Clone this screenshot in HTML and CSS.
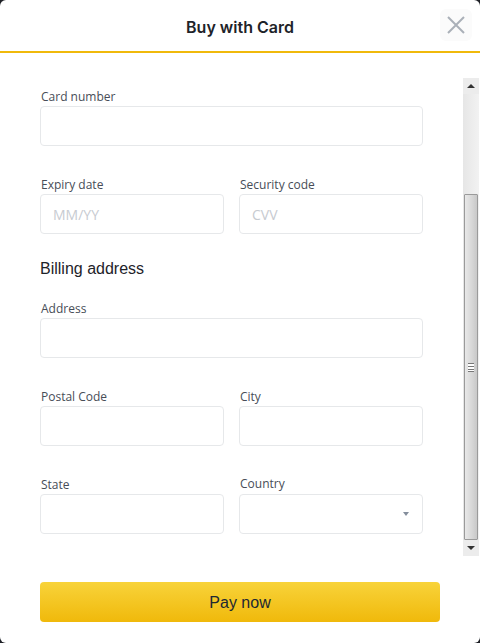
FILE: index.html
```html
<!DOCTYPE html>
<html lang="en">
<head>
    <meta charset="UTF-8">
    <meta name="viewport" content="width=device-width, initial-scale=1.0">
    <title>Buy with Card</title>
    <link rel="stylesheet" href="styles.css">
</head>
<body>
    <div class="modal">
        <!-- Cabeçalho -->
        <div class="header">
            <span></span>
            <h1>Buy with Card</h1>
            <button class="close" aria-label="Close">
                <svg width="18" height="18" viewBox="0 0 18 18">
                    <path d="M1 1 L17 17 M17 1 L1 17" stroke="#aab0b8" stroke-width="2" fill="none"/>
                </svg>
            </button>
        </div>

        <!-- Formulário com barra de rolagem -->
        <div class="scroll-area">
            <form class="card-form">
                <div class="field">
                    <label>Card number</label>
                    <input type="text">
                </div>

                <div class="row">
                    <div class="field">
                        <label>Expiry date</label>
                        <input type="text" placeholder="MM/YY">
                    </div>
                    <div class="field">
                        <label>Security code</label>
                        <input type="text" placeholder="CVV">
                    </div>
                </div>

                <h2>Billing address</h2>

                <div class="field">
                    <label>Address</label>
                    <input type="text">
                </div>

                <div class="row">
                    <div class="field">
                        <label>Postal Code</label>
                        <input type="text">
                    </div>
                    <div class="field">
                        <label>City</label>
                        <input type="text">
                    </div>
                </div>

                <div class="row">
                    <div class="field">
                        <label>State</label>
                        <input type="text">
                    </div>
                    <div class="field country">
                        <label>Country</label>
                        <div class="select"><span class="arrow"></span></div>
                    </div>
                </div>
            </form>

            <div class="scrollbar">
                <div class="sb-btn"><span class="tri up"></span></div>
                <div class="sb-track">
                    <div class="sb-thumb"><span class="grip"></span></div>
                </div>
                <div class="sb-btn"><span class="tri down"></span></div>
            </div>
        </div>

        <div class="footer">
            <button class="pay">Pay now</button>
        </div>
    </div>
</body>
</html>
```
FILE: styles.css
```css
body {
    margin: 0;
    background-color: #1e2026;
    font-family: "Open Sans", Arial, sans-serif;
}
.modal {
    width: 480px;
    height: 643px;
    background-color: #fff;
    border-radius: 6px;
    display: flex;
    flex-direction: column;
    overflow: hidden;
}
.header {
    height: 51px;
    border-bottom: 2px solid #f0b90b;
    display: grid;
    grid-template-columns: 1fr auto 1fr;
    align-items: center;
}
h1 {
    margin: 0;
    font-family: Inter, "Liberation Sans", sans-serif;
    font-size: 16px;
    font-weight: 600;
    color: #1e2329;
    padding-top: 2px;
}
.close {
    justify-self: end;
    margin-right: 8px;
    margin-top: -2px;
    width: 32px;
    height: 32px;
    border: none;
    border-radius: 6px;
    background-color: #fbfbfb;
    display: flex;
    align-items: center;
    justify-content: center;
    padding: 0;
}
.scroll-area {
    height: 509px;
    display: flex;
}
.card-form {
    flex: 1;
    min-width: 0;
    padding: 35px 40px 0 40px;
}
.field {
    display: flex;
    flex-direction: column;
    margin-bottom: 30px;
    flex: 1;
    min-width: 0;
}
label {
    font-size: 12px;
    line-height: 16px;
    color: #474d57;
    padding-top: 1px;
    margin-bottom: 1px;
    padding-left: 1px;
}
input, .select {
    box-sizing: border-box;
    width: 100%;
    min-width: 0;
    height: 40px;
    border: 1px solid #e6e8ea;
    border-radius: 4px;
    padding: 0 12px;
    font-family: "Open Sans", Arial, sans-serif;
    font-size: 14px;
}
input::placeholder {
    color: #c7cbd1;
}
.row {
    display: flex;
    gap: 15px;
}
.country label {
    padding-top: 0;
    margin-bottom: 2px;
}
.select {
    display: flex;
    align-items: center;
    justify-content: flex-end;
    padding-right: 13px;
}
.arrow {
    width: 0;
    height: 0;
    border-left: 3px solid transparent;
    border-right: 3px solid transparent;
    border-top: 4px solid #848e9c;
}
h2 {
    margin: -6px 0 20px 0;
    font-family: "Liberation Sans", Arial, sans-serif;
    font-size: 16px;
    line-height: 22px;
    font-weight: normal;
    color: #1e2329;
}
.scrollbar {
    flex-shrink: 0;
    width: 16px;
    margin-top: 25px;
    margin-right: 1px;
    height: 478px;
    background-color: #ececec;
    display: flex;
    flex-direction: column;
}
.sb-btn {
    height: 16px;
    display: flex;
    align-items: center;
    justify-content: center;
}
.sb-track {
    flex: 1;
    display: flex;
    flex-direction: column;
    justify-content: flex-end;
    background: linear-gradient(to right, #e6e6e6, #f2f2f2);
}
.sb-thumb {
    box-sizing: border-box;
    height: 346px;
    margin: 0 1px;
    border: 1px solid #9a9a9a;
    border-radius: 1px;
    background: linear-gradient(to right, #e8e8e8, #d6d6d6 60%, #c8c8c8);
    display: flex;
    align-items: center;
    justify-content: center;
}
.grip {
    width: 6px;
    height: 7px;
    border-top: 1px solid #777;
    border-bottom: 1px solid #777;
    background: linear-gradient(#fff 0 2px, #777 2px 3px, #fff 3px 5px, #777 5px 6px, #fff 6px);
}
.tri {
    width: 0;
    height: 0;
    border-left: 4px solid transparent;
    border-right: 4px solid transparent;
}
.tri.up {
    border-bottom: 4px solid #333;
}
.tri.down {
    border-top: 4px solid #333;
}
.footer {
    flex: 1;
    padding: 20px 40px 0 40px;
}
.pay {
    width: 100%;
    height: 40px;
    border: none;
    border-radius: 4px;
    background: linear-gradient(#f8d33a, #f0b90b);
    color: #212833;
    font-family: "Liberation Sans", Arial, sans-serif;
    font-size: 16px;
    padding-top: 3px;
    cursor: pointer;
}
```
